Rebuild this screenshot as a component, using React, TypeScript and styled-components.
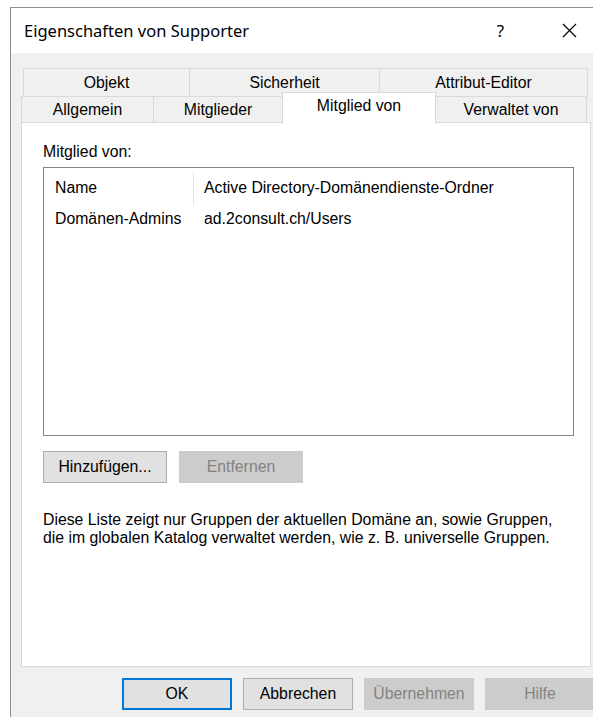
import styled, { createGlobalStyle } from 'styled-components';

const GlobalStyle = createGlobalStyle`
    html, body {
        margin: 0;
        padding: 0;
        background: #ffffff;
        overflow: hidden;
    }
    body {
        font-family: "Liberation Sans", Arial, sans-serif;
    }
`;

interface Member {
    name: string,
    folder: string,
}

const members: Array<Member> = [
    { name: 'Domänen-Admins', folder: 'ad.2consult.ch/Users' },
];

const topTabs = [
    { label: 'Objekt', width: 167 },
    { label: 'Sicherheit', width: 191 },
    { label: 'Attribut-Editor', width: 209 },
];

const frontTabs = [
    { label: 'Allgemein', width: 133 },
    { label: 'Mitglieder', width: 130 },
    { label: 'Mitglied von', width: 154, active: true },
    { label: 'Verwaltet von', width: 152 },
];

const FONT_SIZE = '15.8px';

const Desktop = styled.div`
    padding: 7px 0 0 10px;
`;

const Window = styled.div`
    width: 610px;
    height: 720px;
    border-left: 1px solid #8c8c8c;
    border-top: 1px solid #8c8c8c;
    background: #f0f0f0;
    display: flex;
    flex-direction: column;
`;

const TitleBar = styled.div`
    height: 45px;
    background: #ffffff;
    display: flex;
    align-items: center;
    padding: 0 17px 0 13px;
`;

const Title = styled.div`
    flex: 1;
    font-family: "Noto Sans", "Open Sans", sans-serif;
    font-size: 16.5px;
    color: #000000;
`;

const CaptionButton = styled.div`
    width: 69px;
    height: 45px;
    display: flex;
    justify-content: center;
    align-items: center;
    font-family: "Noto Sans", sans-serif;
    font-size: 17px;
    color: #000000;
`;

const Content = styled.div`
    padding: 15px 0 0 10px;
    display: flex;
    flex-direction: column;
`;

const TabRow = styled.div<{ $offset: number }>`
    display: flex;
    margin-left: ${props => props.$offset}px;
    height: ${props => props.$offset ? 28 : 26}px;
`;

const Tab = styled.div<{ $active?: boolean }>`
    box-sizing: border-box;
    height: ${props => props.$active ? '32px' : '100%'};
    margin-top: ${props => props.$active ? -4 : 0}px;
    margin-left: -1px;
    border: 1px solid #d9d9d9;
    border-bottom: none;
    background: ${props => props.$active ? '#ffffff' : '#f0f0f0'};
    display: flex;
    justify-content: center;
    align-items: center;
    padding-bottom: ${props => props.$active ? 5 : 0}px;
    font-size: ${FONT_SIZE};
    color: #000000;
    position: relative;
    z-index: ${props => props.$active ? 2 : 0};
    &:first-child {
        margin-left: 0;
    }
`;

const Panel = styled.div`
    box-sizing: border-box;
    width: 570px;
    height: 545px;
    background: #ffffff;
    border: 1px solid #d9d9d9;
    padding: 20px 0 0 21px;
    display: flex;
    flex-direction: column;
    align-items: flex-start;
`;

const Label = styled.div`
    font-size: ${FONT_SIZE};
    line-height: 18px;
    color: #000000;
    margin-bottom: 6px;
`;

const ListBox = styled.div`
    box-sizing: border-box;
    width: 531px;
    height: 269px;
    border: 1px solid #828282;
    background: #ffffff;
`;

const ListTable = styled.table`
    width: 100%;
    table-layout: fixed;
    border-collapse: collapse;
    font-size: ${FONT_SIZE};
    line-height: 18px;
    color: #000000;
`;

// column header, the first one carries the thin splitter on its right edge
const HeaderCell = styled.th<{ $divider?: boolean }>`
    height: 36px;
    padding: 2px 0 0 ${props => props.$divider ? 11 : 10}px;
    text-align: left;
    font-weight: normal;
    white-space: nowrap;
    vertical-align: middle;
    background-image: ${props => props.$divider ? 'linear-gradient(#e5e5e5, #e5e5e5)' : 'none'};
    background-size: 1px 33px;
    background-position: right 0 bottom 1px;
    background-repeat: no-repeat;
`;

const ListCell = styled.td<{ $lead?: boolean }>`
    height: 26px;
    padding: 0 0 0 ${props => props.$lead ? 11 : 10}px;
    white-space: nowrap;
    vertical-align: middle;
`;

const ButtonRow = styled.div`
    display: flex;
    gap: 12px;
    margin-top: 15px;
`;

const Button = styled.div<{ $disabled?: boolean, $primary?: boolean, $wide?: boolean }>`
    box-sizing: border-box;
    width: ${props => props.$wide ? 124 : 110}px;
    height: 32px;
    display: flex;
    justify-content: center;
    align-items: center;
    font-size: ${FONT_SIZE};
    background: ${props => props.$disabled ? '#cccccc' : '#e1e1e1'};
    border: ${props => props.$primary ? '2px solid #0078d7' : props.$disabled ? '1px solid #cccccc' : '1px solid #adadad'};
    color: ${props => props.$disabled ? '#838383' : '#000000'};
    flex-shrink: 0;
`;

const Note = styled.p`
    margin: 28px 0 0 0;
    font-size: ${FONT_SIZE};
    line-height: 18px;
    color: #000000;
`;

const DialogButtons = styled.div`
    display: flex;
    gap: 11px;
    margin: 11px 0 0 101px;
`;

const CloseIcon = () => (
    <svg width="15" height="15" viewBox="0 0 15 15">
        <path d="M1 1 L14 14 M14 1 L1 14" stroke="#000000" strokeWidth="1.2" fill="none" />
    </svg>
);

const App = () => {
    return (
        <>
            <GlobalStyle />
            <Desktop>
                <Window>
                    <TitleBar>
                        <Title>Eigenschaften von Supporter</Title>
                        <CaptionButton>?</CaptionButton>
                        <CaptionButton><CloseIcon /></CaptionButton>
                    </TitleBar>
                    <Content>
                        <TabRow $offset={2}>
                            {topTabs.map((tab) => (
                                <Tab key={tab.label} style={{ width: tab.width }}>{tab.label}</Tab>
                            ))}
                        </TabRow>
                        <TabRow $offset={0}>
                            {frontTabs.map((tab) => (
                                <Tab key={tab.label} $active={tab.active} style={{ width: tab.width }}>{tab.label}</Tab>
                            ))}
                        </TabRow>
                        <Panel>
                            <Label>Mitglied von:</Label>
                            <ListBox>
                                <ListTable>
                                    <colgroup>
                                        <col style={{ width: 150 }} />
                                        <col />
                                    </colgroup>
                                    <thead>
                                        <tr>
                                            <HeaderCell $divider>Name</HeaderCell>
                                            <HeaderCell>Active Directory-Domänendienste-Ordner</HeaderCell>
                                        </tr>
                                    </thead>
                                    <tbody>
                                        {members.map((member) => (
                                            <tr key={member.name}>
                                                <ListCell $lead>{member.name}</ListCell>
                                                <ListCell>{member.folder}</ListCell>
                                            </tr>
                                        ))}
                                    </tbody>
                                </ListTable>
                            </ListBox>
                            <ButtonRow>
                                <Button $wide>Hinzufügen...</Button>
                                <Button $wide $disabled>Entfernen</Button>
                            </ButtonRow>
                            <Note>
                                Diese Liste zeigt nur Gruppen der aktuellen Domäne an, sowie Gruppen,<br />
                                die im globalen Katalog verwaltet werden, wie z. B. universelle Gruppen.
                            </Note>
                        </Panel>
                        <DialogButtons>
                            <Button $primary>OK</Button>
                            <Button>Abbrechen</Button>
                            <Button $disabled>Übernehmen</Button>
                            <Button $disabled>Hilfe</Button>
                        </DialogButtons>
                    </Content>
                </Window>
            </Desktop>
        </>
    );
};

export default App;
